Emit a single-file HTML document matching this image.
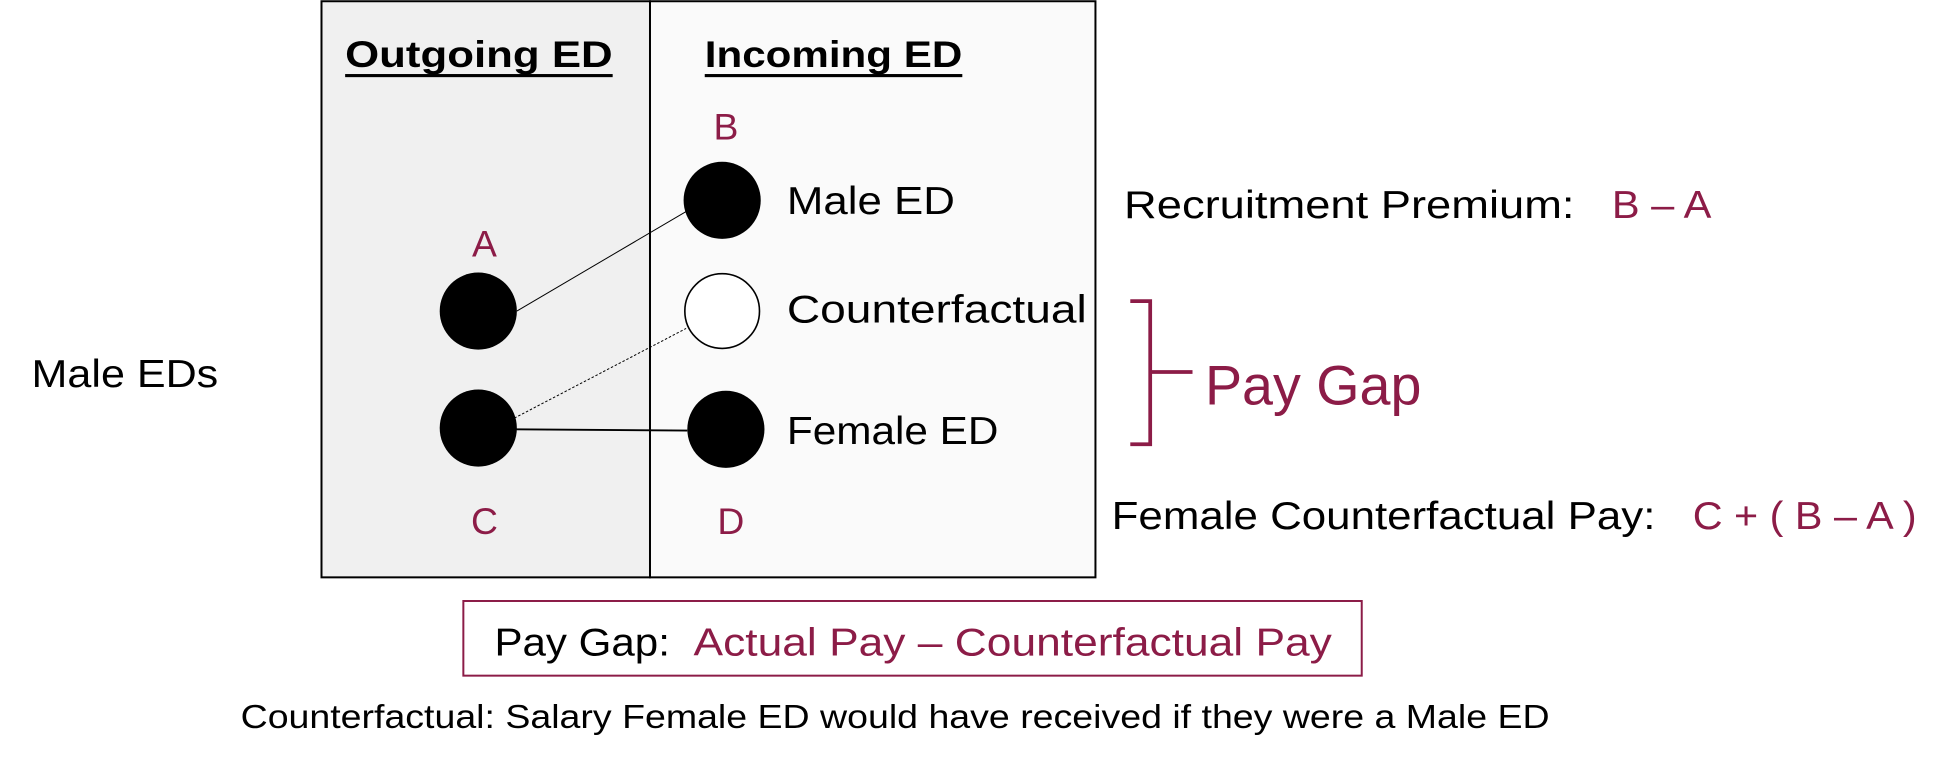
<!DOCTYPE html>
<html><head><meta charset="utf-8"><style>
html,body{margin:0;padding:0;background:#fff;}
svg{display:block;}
text{font-family:"Liberation Sans",sans-serif;}
</style></head><body>
<svg width="1952" height="764" viewBox="0 0 1568 614" xmlns="http://www.w3.org/2000/svg">
<rect x="0" y="0" width="1568" height="614" fill="#fff"/>
<rect x="258" y="1" width="264" height="463" fill="#f0f0f0" stroke="#000" stroke-width="1.6"/>
<rect x="522" y="1" width="358" height="463" fill="#fafafa" stroke="#000" stroke-width="1.6"/>
<g fill="#000" font-size="30" font-weight="bold">
<text x="277" y="54" textLength="215" lengthAdjust="spacingAndGlyphs">Outgoing  ED</text>
<text x="566" y="54" textLength="207" lengthAdjust="spacingAndGlyphs">Incoming ED</text>
</g>
<rect x="277" y="59.5" width="215" height="2.5" fill="#000"/>
<rect x="566" y="59.5" width="207" height="2.5" fill="#000"/>
<g fill="#8c1c47" font-size="30" text-anchor="middle">
<text x="583" y="112">B</text>
<text x="389" y="206">A</text>
<text x="389" y="429">C</text>
<text x="587" y="429">D</text>
</g>
<line x1="415" y1="250" x2="551" y2="170" stroke="#000" stroke-width="0.8"/>
<line x1="413" y1="336" x2="551" y2="264" stroke="#000" stroke-width="0.8" stroke-dasharray="2,1.5"/>
<line x1="413" y1="345" x2="552" y2="346" stroke="#000" stroke-width="1.5"/>
<circle cx="580" cy="161" r="31" fill="#000"/>
<circle cx="384" cy="250" r="31" fill="#000"/>
<circle cx="580" cy="250" r="30" fill="#fff" stroke="#000" stroke-width="1.3"/>
<circle cx="384" cy="344" r="31" fill="#000"/>
<circle cx="583" cy="345" r="31" fill="#000"/>
<g fill="#000" font-size="31">
<text x="632" y="172" textLength="135" lengthAdjust="spacingAndGlyphs">Male ED</text>
<text x="632" y="259" textLength="241" lengthAdjust="spacingAndGlyphs">Counterfactual</text>
<text x="632" y="357" textLength="170" lengthAdjust="spacingAndGlyphs">Female ED</text>
<text x="25" y="311" textLength="150" lengthAdjust="spacingAndGlyphs">Male EDs</text>
<text x="903" y="175" textLength="362" lengthAdjust="spacingAndGlyphs">Recruitment Premium:</text>
<text x="893" y="425" textLength="437" lengthAdjust="spacingAndGlyphs">Female Counterfactual Pay:</text>
<text x="397" y="527" textLength="141" lengthAdjust="spacingAndGlyphs">Pay Gap:</text>
</g>
<g fill="#8c1c47" font-size="31">
<text x="1295" y="175" textLength="80" lengthAdjust="spacingAndGlyphs">B – A</text>
<text x="1360" y="425" textLength="180" lengthAdjust="spacingAndGlyphs">C + ( B – A )</text>
<text x="557" y="527" textLength="513" lengthAdjust="spacingAndGlyphs">Actual Pay – Counterfactual Pay</text>
<text x="968" y="325" font-size="45" textLength="174" lengthAdjust="spacingAndGlyphs">Pay Gap</text>
</g>
<path d="M908 242 H924 V357 H908 M924 299 H958" fill="none" stroke="#8c1c47" stroke-width="3"/>
<rect x="372" y="483" width="722" height="60" fill="none" stroke="#8c1c47" stroke-width="1.6"/>
<text x="193" y="585" font-size="27" fill="#000" textLength="1052" lengthAdjust="spacingAndGlyphs">Counterfactual: Salary Female ED would have received if they were a Male ED</text>
</svg>
</body></html>
